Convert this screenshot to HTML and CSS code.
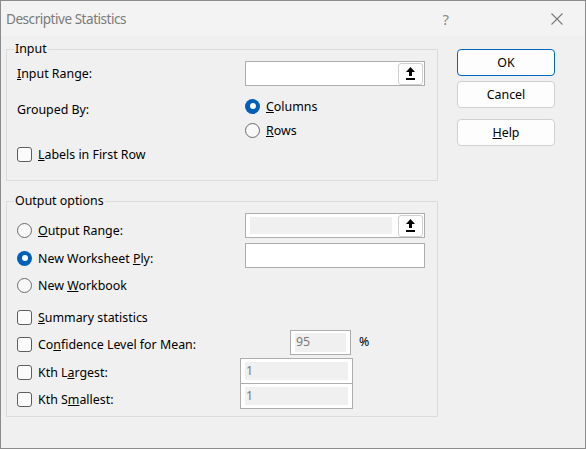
FILE: index.html
```html
<!DOCTYPE html>
<html>
<head>
<meta charset="utf-8">
<link rel="stylesheet" href="styles.css">
</head>
<body>
<div class="window">
  <div class="titlebar">
    <span class="title">Descriptive Statistics</span>
    <span class="qmark">?</span>
    <svg class="close" width="12" height="12" viewBox="0 0 12 12"><path d="M0.5 0.5 L11.5 11.5 M11.5 0.5 L0.5 11.5" stroke="#7a7a7a" stroke-width="1.1" fill="none"/></svg>
  </div>
  <div class="body">
    <div class="main">
      <div class="group group-input">
        <div class="legend">Input</div>
        <div class="rows">
          <div class="row row-range">
            <span class="lbl w228"><u>I</u>nput Range:</span>
            <div class="field">
              <div class="field-fill"></div>
              <div class="pick"><svg width="9" height="13" viewBox="0 0 9 13"><path d="M4.5 0 L9 5 L6 5 L6 9 L3 9 L3 5 L0 5 Z" fill="#000"/><rect x="0" y="11" width="9" height="2" fill="#000"/></svg></div>
            </div>
          </div>
          <div class="row row-grouped">
            <span class="lbl w228 grouped">Grouped By:</span>
            <label class="opt"><span class="radio on"></span><span><u>C</u>olumns</span></label>
          </div>
          <div class="row row-rows">
            <label class="opt indent228"><span class="radio"></span><span><u>R</u>ows</span></label>
          </div>
          <div class="row row-labels">
            <label class="opt"><span class="check"></span><span><u>L</u>abels in First Row</span></label>
          </div>
        </div>
      </div>

      <div class="group group-output">
        <div class="legend">Output options</div>
        <div class="rows">
          <div class="row h28 first">
            <label class="opt w228"><span class="radio"></span><span><u>O</u>utput Range:</span></label>
            <div class="field up9">
              <div class="field-fill disabled"></div>
              <div class="pick"><svg width="9" height="13" viewBox="0 0 9 13"><path d="M4.5 0 L9 5 L6 5 L6 9 L3 9 L3 5 L0 5 Z" fill="#000"/><rect x="0" y="11" width="9" height="2" fill="#000"/></svg></div>
            </div>
          </div>
          <div class="row h28">
            <label class="opt w228"><span class="radio on"></span><span>New Worksheet <u>P</u>ly:</span></label>
            <div class="field up5"></div>
          </div>
          <div class="row h27">
            <label class="opt"><span class="radio"></span><span>New <u>W</u>orkbook</span></label>
          </div>
          <div class="row h28 gap4">
            <label class="opt"><span class="check"></span><span><u>S</u>ummary statistics</span></label>
          </div>
          <div class="row h27">
            <label class="opt w273"><span class="check"></span><span>Co<u>n</u>fidence Level for Mean:</span></label>
            <div class="numbox conf"><div class="numfill">95</div></div>
            <span class="pct">%</span>
          </div>
          <div class="row h28">
            <label class="opt w223"><span class="check"></span><span>Kth L<u>a</u>rgest:</span></label>
            <div class="numbox kth up2"><div class="numfill">1</div></div>
          </div>
          <div class="row h27">
            <label class="opt w223"><span class="check"></span><span>Kth S<u>m</u>allest:</span></label>
            <div class="numbox kth up7"><div class="numfill">1</div></div>
          </div>
        </div>
      </div>
    </div>

    <div class="buttons">
      <div class="btn default">OK</div>
      <div class="btn">Cancel</div>
      <div class="btn help"><u>H</u>elp</div>
    </div>
  </div>
</div>
</body>
</html>
```

FILE: styles.css
```css
html, body {
  margin: 0;
  padding: 0;
  background: #f0f0f0;
}

.window {
  width: 586px;
  height: 449px;
  box-sizing: border-box;
  border: 1px solid #8c8c8c;
  background: #f0f0f0;
  font-family: "Noto Sans", "Liberation Sans", sans-serif;
  font-size: 12.4px;
  color: #000;
  overflow: hidden;
}

.titlebar {
  height: 35px;
  background: #f3f3f3;
  display: flex;
  align-items: center;
  padding-left: 5px;
}

.title {
  font-size: 13.6px;
  letter-spacing: -0.5px;
  color: #7b7b7b;
  flex: 1;
}

.qmark {
  font-size: 15px;
  color: #8a8a8a;
  margin-right: 102px;
}

.close {
  margin-right: 22px;
}

.body {
  display: flex;
  padding: 13px 0 0 5px;
}

.main {
  width: 432px;
}

.group {
  border: 1px solid #dcdcdc;
}

.group-output {
  margin-top: 20px;
}

.legend {
  height: 16px;
  line-height: 16px;
  margin: -9px 0 0 7px;
  padding: 0 1px;
  width: fit-content;
  background: #f0f0f0;
}

.rows {
  padding-left: 10px;
}

.group-input .rows {
  padding-bottom: 18px;
}

.group-output .rows {
  padding-bottom: 3px;
}

.row {
  display: flex;
  align-items: center;
}

.row-range {
  margin-top: 4px;
  height: 25px;
}

.row-grouped {
  margin-top: 10px;
  height: 20px;
}

.row-rows {
  margin-top: 4px;
  height: 20px;
}

.row-labels {
  margin-top: 7px;
  height: 15px;
}

.h28 { height: 28px; }
.h27 { height: 27px; }
.first { margin-top: 7px; }
.gap4 { margin-top: 4px; }

.lbl {
  display: block;
  white-space: nowrap;
}

.w228 { width: 228px; flex: none; }
.w273 { width: 273px; flex: none; }
.w223 { width: 223px; flex: none; }
.indent228 { margin-left: 228px; }

.grouped {
  margin-top: 6px;
}

.opt {
  display: flex;
  align-items: center;
  gap: 6px;
  white-space: nowrap;
}

.radio {
  width: 15px;
  height: 15px;
  box-sizing: border-box;
  border-radius: 50%;
  border: 1px solid #6b6b6b;
  background: #f8f8f8;
  flex: none;
  display: flex;
  align-items: center;
  justify-content: center;
}

.radio.on {
  border: none;
  background: #005fb8;
}

.radio.on::after {
  content: "";
  width: 6px;
  height: 6px;
  border-radius: 50%;
  background: #fff;
}

.check {
  width: 15px;
  height: 15px;
  box-sizing: border-box;
  border: 1px solid #5e5e5e;
  border-radius: 3px;
  background: #fbfbfb;
  flex: none;
}

.field {
  width: 180px;
  height: 25px;
  box-sizing: border-box;
  border: 1px solid #adadad;
  background: #fff;
  display: flex;
  align-items: center;
  padding: 0 1px 0 4px;
  flex: none;
}

.up9 { margin-bottom: 9px; }
.up5 { margin-bottom: 5px; }
.up2 { margin-bottom: 2px; }
.up7 { margin-bottom: 7px; }

.field-fill {
  flex: 1;
  height: 17px;
}

.field-fill.disabled {
  background: #f0f0f0;
  margin-right: 6px;
}

.pick {
  width: 25px;
  height: 22px;
  box-sizing: border-box;
  border: 1px solid #cfcfcf;
  border-radius: 3px;
  background: #fff;
  display: flex;
  align-items: center;
  justify-content: center;
  flex: none;
}

.numbox {
  height: 26px;
  box-sizing: border-box;
  border: 1px solid #adadad;
  background: #fff;
  padding: 3px 4px;
  flex: none;
}

.numbox.conf {
  width: 61px;
  height: 25px;
  padding: 2px 4px 2px 4px;
  margin-bottom: 4px;
}

.numbox.kth {
  width: 113px;
  padding: 3px 4px;
}

.numfill {
  height: 100%;
  background: #f0f0f0;
  color: #7a7a7a;
  line-height: 18px;
  padding-left: 1px;
}

.pct {
  margin-left: 8px;
  margin-bottom: 7px;
}

.buttons {
  margin-left: 19px;
  display: flex;
  flex-direction: column;
  width: 98px;
}

.btn {
  height: 27px;
  box-sizing: border-box;
  border: 1px solid #d0d0d0;
  border-radius: 4px;
  background: #fdfdfd;
  display: flex;
  align-items: center;
  justify-content: center;
  margin-top: 5px;
}

.btn.default {
  border-color: #0067c0;
  margin-top: 0;
}

.btn.help {
  margin-top: 11px;
}
```
